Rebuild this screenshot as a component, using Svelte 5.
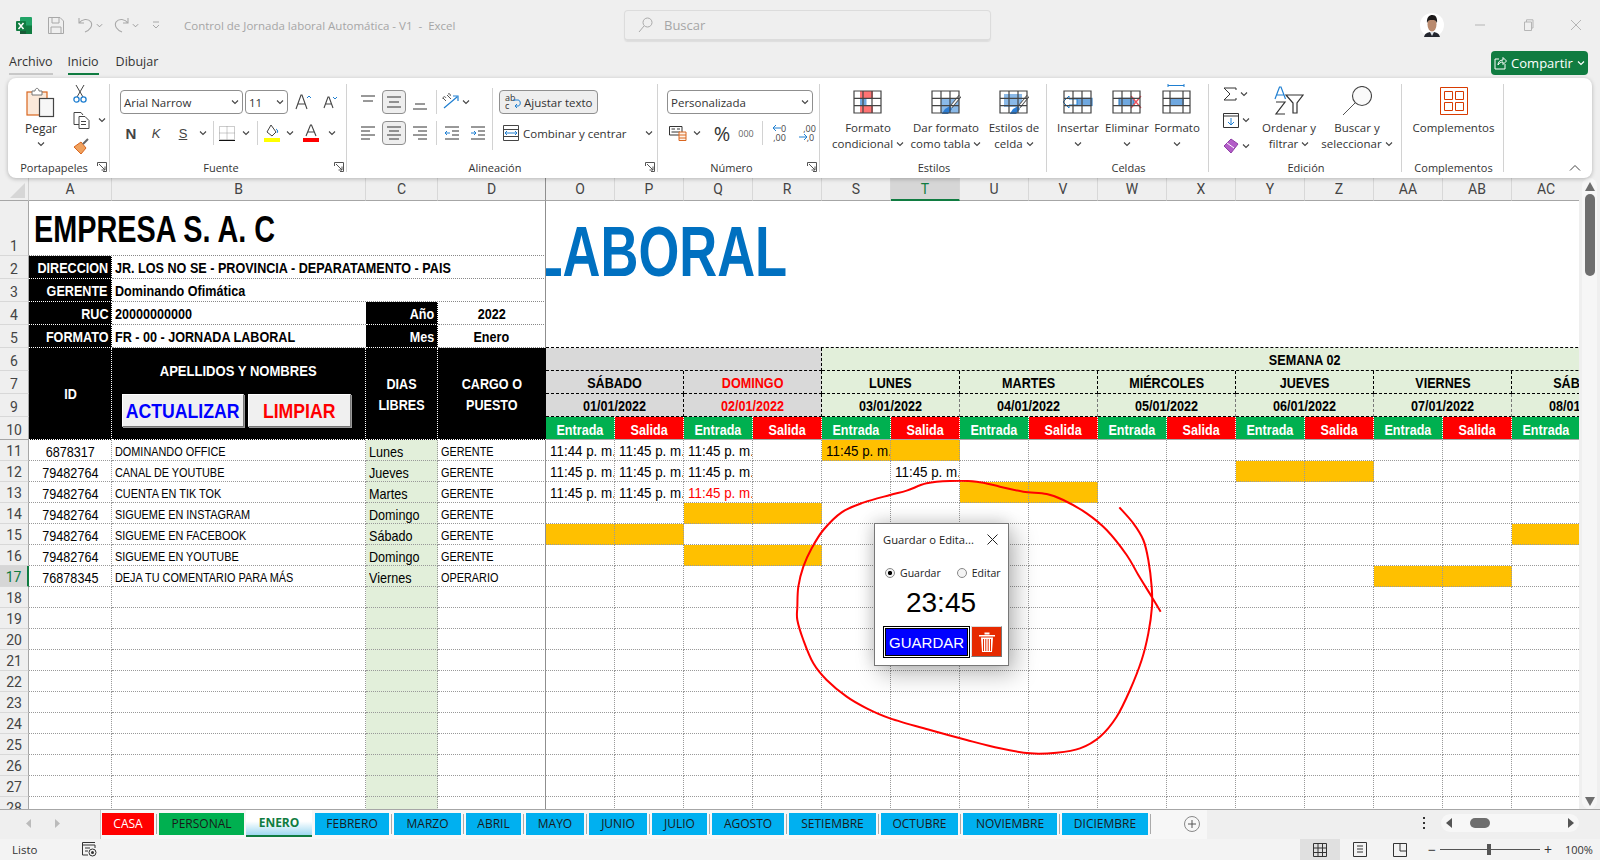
<script>
	const wk = ['O','P','Q','R','S','T','U','V','W','X','Y','Z','AA','AB','AC','AD','AE','AF'];
	const shown = ['O','P','Q','R','S','T','U','V','W','X','Y','Z','AA','AB','AC'];
	const left = ['A','B','C','D'];
	const days = ['SÁBADO','DOMINGO','LUNES','MARTES','MIÉRCOLES','JUEVES','VIERNES','SÁBADO','DOMINGO'];
	const t = '11:45 p. m.';

	const people = [
		{ row: 11, id: '6878317', name: 'DOMINANDO OFFICE', free: 'Lunes', job: 'GERENTE', times: { O: '11:44 p. m.', P: t, Q: t, S: t }, hi: ['S','T'] },
		{ row: 12, id: '79482764', name: 'CANAL DE YOUTUBE', free: 'Jueves', job: 'GERENTE', times: { O: t, P: t, Q: t, T: t }, hi: ['Y','Z'] },
		{ row: 13, id: '79482764', name: 'CUENTA EN TIK TOK', free: 'Martes', job: 'GERENTE', times: { O: t, P: t, Q: t }, hi: ['U','V'], red: 'Q' },
		{ row: 14, id: '79482764', name: 'SIGUEME EN INSTAGRAM', free: 'Domingo', job: 'GERENTE', times: {}, hi: ['Q','R'] },
		{ row: 15, id: '79482764', name: 'SIGUEME EN FACEBOOK', free: 'Sábado', job: 'GERENTE', times: {}, hi: ['O','P','AC','AD'] },
		{ row: 16, id: '79482764', name: 'SIGUEME EN YOUTUBE', free: 'Domingo', job: 'GERENTE', times: {}, hi: ['Q','R'] },
		{ row: 17, id: '76878345', name: 'DEJA TU COMENTARIO PARA MÁS', free: 'Viernes', job: 'OPERARIO', times: {}, hi: ['AA','AB'] }
	];
	const blanks = [18,19,20,21,22,23,24,25,26,27,28];

	const tabs = [
		{ name: 'CASA', w: 52, cls: 'red' }, { name: 'PERSONAL', w: 85, cls: 'green' },
		{ name: 'ENERO', w: 66, cls: 'active' }, { name: 'FEBRERO', w: 74 }, { name: 'MARZO', w: 67 },
		{ name: 'ABRIL', w: 55 }, { name: 'MAYO', w: 58 }, { name: 'JUNIO', w: 58 }, { name: 'JULIO', w: 55 },
		{ name: 'AGOSTO', w: 72 }, { name: 'SETIEMBRE', w: 87 }, { name: 'OCTUBRE', w: 77 },
		{ name: 'NOVIEMBRE', w: 94 }, { name: 'DICIEMBRE', w: 86 }
	];

	// hand drawn circle, traced from the picture (units are 1/3 px)
	const pts = [[1142,395],[1115,350],[1075,285],[1040,225],[980,150],[920,100],[850,60],[800,42],[730,35],[660,20],[590,5],[510,3],[440,10],[380,32],[330,45],[250,68],[185,97],[130,150],[95,205],[70,260],[55,320],[52,380],[52,420],[70,480],[100,550],[140,600],[200,650],[260,685],[330,715],[450,750],[560,780],[660,805],[750,820],[830,818],[900,805],[960,770],[1010,710],[1050,630],[1085,540],[1105,460],[1116,380],[1115,320],[1105,240],[1090,180],[1060,130],[1018,82]];
	const smooth = (p) => {
		let d = `M${p[0][0]} ${p[0][1]}`;
		for (let i = 0; i < p.length - 1; i++) {
			const a = p[i - 1] || p[i], b = p[i], c = p[i + 1], e = p[i + 2] || c;
			d += `C${b[0] + (c[0] - a[0]) / 6} ${b[1] + (c[1] - a[1]) / 6} ${c[0] - (e[0] - b[0]) / 6} ${c[1] - (e[1] - b[1]) / 6} ${c[0]} ${c[1]}`;
		}
		return d;
	};
	const circle = smooth(pts);
</script>

{#snippet chev(size = 8)}
	<svg class="chev" width={size} height={size} viewBox="0 0 8 8"><path d="M1 2.5 4 5.5 7 2.5" fill="none" stroke="#444" stroke-width="1.1"/></svg>
{/snippet}

{#snippet launcher()}
	<svg class="launch" width="10" height="10" viewBox="0 0 10 10"><path d="M.5 4V.5H9.5V9.5H6M2 2 8 8M8 4.5V8H4.5" fill="none" stroke="#555"/></svg>
{/snippet}

{#snippet lines(rows)}
	<svg width="16" height="18" viewBox="0 0 16 18">{#each rows as r}<line x1={r[0]} x2={r[1]} y1={r[2]} y2={r[2]} stroke="#333"/>{/each}</svg>
{/snippet}

{#snippet table3(hi)}
	<svg width="30" height="24" viewBox="0 0 30 24">
		{@render hi()}
		<path d="M1 1H28V23H1ZM1 8.3H28M1 15.6H28M10 1V23M19 1V23" fill="none" stroke="#444" stroke-width="1.2"/>
	</svg>
{/snippet}

{#snippet brush()}
	<path d="M29 6 20 17" stroke="#555" stroke-width="3.5"/><path d="M29 6 20 17" stroke="#fff" stroke-width="1.5"/>
	<path d="M19 16 14 19 10 25 17 24 21 19Z" fill="#2b7cd3"/>
{/snippet}

<div class="app">
	<header class="title">
		<svg class="xl" width="16" height="17" viewBox="0 0 16 17">
			<rect x="4" width="12" height="17" rx="1" fill="#21a366"/><rect x="10" y="8.5" width="6" height="8.5" fill="#107c41"/><rect x="4" y="8.5" width="6" height="8.5" fill="#185c37"/>
			<rect y="4" width="10" height="10" rx="1" fill="#107c41"/><path d="M2.5 6 7.5 12M7.5 6 2.5 12" stroke="#fff" stroke-width="1.5"/>
		</svg>
		<svg class="qat" width="16" height="17" viewBox="0 0 16 17"><path d="M.5.5H12L15.5 4V16.5H.5ZM4 .5V6H11V.5M3 16.5V10H13V16.5" fill="none" stroke="#a8a8a8"/></svg>
		<svg class="qat undo" width="15" height="16" viewBox="0 0 15 16"><path d="M1 1V6H6M1 6C4 2 10 1 13 5 15 9 12 13 7 15" fill="none" stroke="#a8a8a8" stroke-width="1.1"/></svg>
		<span class="qchev">{@render chev(7)}</span>
		<svg class="qat redo" width="15" height="16" viewBox="0 0 15 16"><path d="M14 1V6H9M14 6C11 2 5 1 2 5 0 9 3 13 8 15" fill="none" stroke="#a8a8a8" stroke-width="1.1"/></svg>
		<span class="qchev">{@render chev(7)}</span>
		<svg class="qat more" width="8" height="9" viewBox="0 0 8 9"><path d="M1 1H7M1 4 4 7 7 4" fill="none" stroke="#a8a8a8"/></svg>
		<span class="doc">Control de Jornada laboral Automática - V1 &nbsp;- &nbsp;Excel</span>
		<div class="search">
			<svg width="15" height="16" viewBox="0 0 15 16"><circle cx="9.5" cy="5.5" r="4.5" fill="none" stroke="#aaa"/><path d="M6 9 1 15" stroke="#aaa"/></svg>
			<span>Buscar</span>
		</div>
		<svg class="avatar" width="24" height="24" viewBox="0 0 24 24">
			<ellipse cx="12" cy="12" rx="12" ry="12" fill="#fff"/>
			<path d="M4 24C5 20 8 19.5 10 19H14C16 19.5 19 20 20 24Z" fill="#23262e"/><path d="M10 19 12 23 14 19Z" fill="#dfe3ea"/>
			<ellipse cx="12" cy="11.5" rx="4.5" ry="7" fill="#b98a6e"/><path d="M7 10C6.5 4.5 9 2 12.5 2 16 2 17.5 5.5 17 10 16 7.5 15 7 12 7 9 7 8 7.5 7 10Z" fill="#1d1a1a"/>
		</svg>
		<div class="win">
			<svg width="12" height="12" viewBox="0 0 12 12"><path d="M1 6H11" stroke="#b5b5b5"/></svg>
			<svg width="12" height="12" viewBox="0 0 12 12"><path d="M2.5 3H9.5V11.5H2.5ZM4.5 3V.8H11V9H9.5" fill="none" stroke="#b5b5b5"/></svg>
			<svg width="12" height="12" viewBox="0 0 12 12"><path d="M1 1 11 11M11 1 1 11" stroke="#b5b5b5"/></svg>
		</div>
	</header>

	<nav class="tabsrow">
		<span class="rtab file">Archivo</span>
		<span class="rtab on">Inicio</span>
		<span class="rtab">Dibujar</span>
		<button class="share">
			<svg width="13" height="14" viewBox="0 0 13 14"><path d="M5 3H1V13H11V8M4 9C4 6 6 4 9 4V1.5L12.5 5 9 8.5V6C7 6 5 7 4 9Z" fill="none" stroke="#fff"/></svg>
			Compartir
			<svg width="8" height="8" viewBox="0 0 8 8"><path d="M1 2.5 4 5.5 7 2.5" fill="none" stroke="#fff" stroke-width="1.2"/></svg>
		</button>
	</nav>

	<section class="ribbon">
		<div class="group" style="width:103px">
			<div class="gbody clip">
				<div class="paste">
					<svg width="30" height="32" viewBox="0 0 30 32">
						<rect x="1" y="6" width="20" height="23" fill="#fbe9da" stroke="#d9661f" stroke-width="1.2"/>
						<path d="M6 9V5H9C9 1.5 13 1.5 13 5H16V9Z" fill="#fff" stroke="#777"/>
						<rect x="13.5" y="12.5" width="14" height="18" fill="#f7f7f7" stroke="#444" stroke-width="1.2"/>
					</svg>
					<span>Pegar</span>
					{@render chev()}
				</div>
				<div class="clipcol">
					<svg width="14" height="20" viewBox="0 0 14 20"><path d="M3 1 10 13M11 1 4 13" stroke="#444"/><circle cx="3.5" cy="15.5" r="2.6" fill="none" stroke="#1f7fd1" stroke-width="1.3"/><circle cx="10.5" cy="15.5" r="2.6" fill="none" stroke="#1f7fd1" stroke-width="1.3"/></svg>
					<span class="row"><svg width="18" height="17" viewBox="0 0 18 17"><path d="M6 12.5H1V.5H8L10 3M6 4.5H12L16 8.5V16.5H6ZM8 9.5H13M8 12.5H13" fill="none" stroke="#444"/></svg>{@render chev()}</span>
					<svg width="17" height="17" viewBox="0 0 17 17"><path d="M1 9 8 4 13 10 8 16Z" fill="#f0a15d" stroke="#d9661f"/><path d="M10 6 15 1" stroke="#666" stroke-width="2"/></svg>
				</div>
			</div>
			<div class="glabel first"><span>Portapapeles</span>{@render launcher()}</div>
		</div>

		<div class="group" style="width:237px">
			<div class="gbody col font">
				<div class="line">
					<div class="select" style="width:123px"><span>Arial Narrow</span>{@render chev()}</div>
					<div class="select" style="width:43px"><span>11</span>{@render chev()}</div>
					<svg class="grow" width="17" height="16" viewBox="0 0 17 16"><path d="M1 15 6 1H7L12 15M3 10H10" fill="none" stroke="#444" stroke-width="1.1"/><path d="M12 4 14 2 16 4" fill="none" stroke="#1f7fd1"/></svg>
					<svg class="shrink" width="15" height="14" viewBox="0 0 15 14"><path d="M1 13 5 2H6L10 13M2.5 9H8.5" fill="none" stroke="#444" stroke-width="1.1"/><path d="M10 2 12 4 14 2" fill="none" stroke="#1f7fd1"/></svg>
				</div>
				<div class="line">
					<b class="fb" style="width:22px">N</b>
					<i class="fb" style="width:28px">K</i>
					<u class="fb" style="width:26px">S</u>
					<span class="slot" style="width:14px">{@render chev()}</span>
					<span class="slot" style="width:6px"><i class="vsep"></i></span>
					<span class="slot" style="width:22px"><svg width="16" height="15" viewBox="0 0 16 15"><path d="M.5.5H15.5V13.5H.5ZM8 .5V13.5M.5 7H15.5" fill="none" stroke="#999" stroke-dasharray="1 1"/><path d="M0 14.5H16" stroke="#111"/></svg></span>
					<span class="slot" style="width:16px">{@render chev()}</span>
					<span class="slot" style="width:6px"><i class="vsep"></i></span>
					<span class="slot" style="width:24px"><svg width="16" height="18" viewBox="0 0 16 18"><path d="M7 1 12 8 8 12 3 8Z" fill="#fff" stroke="#444"/><path d="M12 5C14 6 14 8 13 9" fill="none" stroke="#1f7fd1"/><rect y="14" width="16" height="4" fill="#ffff00"/></svg></span>
					<span class="slot" style="width:12px">{@render chev()}</span>
					<span class="slot" style="width:30px"><svg width="16" height="18" viewBox="0 0 16 18"><path d="M3 12 7.5 1H8.5L13 12M4.5 8H11.5" fill="none" stroke="#444" stroke-width="1.1"/><rect y="14" width="16" height="4" fill="#ff0000"/></svg></span>
					<span class="slot" style="width:12px">{@render chev()}</span>
				</div>
			</div>
			<div class="glabel"><span>Fuente</span>{@render launcher()}</div>
		</div>

		<div class="group" style="width:311px">
			<div class="gbody align">
				<div class="algrid">
					<span class="slot">{@render lines([[1,15,3],[3,13,8]])}</span>
					<span class="slot box">{@render lines([[1,15,4],[3,13,9],[1,15,14]])}</span>
					<span class="slot">{@render lines([[3,13,11],[1,15,16]])}</span>
					<span class="slot sepl"><i class="vsep"></i></span>
					<span class="slot wide tight">
						<svg width="18" height="18" viewBox="0 0 18 18">
							<path d="M2 15 15 4M11 3H16V8" fill="none" stroke="#1f7fd1" stroke-width="1.2"/>
							<path d="M1 6C1 3 3 3 4 5M1 5 4 8M5 2 9 6M6 1C8 0 9 2 8 3" fill="none" stroke="#555"/>
						</svg>
						{@render chev()}
					</span>
					<span class="slot">{@render lines([[1,15,3],[1,10,7],[1,15,11],[1,10,15]])}</span>
					<span class="slot box">{@render lines([[1,15,3],[3,13,7],[1,15,11],[3,13,15]])}</span>
					<span class="slot">{@render lines([[1,15,3],[6,15,7],[1,15,11],[6,15,15]])}</span>
					<span class="slot sepl"><i class="vsep"></i></span>
					<span class="slot wide">
						<svg class="ind" width="16" height="15" viewBox="0 0 16 15"><path d="M1 1H15M8 5H15M8 9H15M1 13H15" stroke="#333"/><path d="M1 7H6M3 5 1 7 3 9" fill="none" stroke="#1f7fd1"/></svg>
						<svg class="ind" width="16" height="15" viewBox="0 0 16 15"><path d="M1 1H15M8 5H15M8 9H15M1 13H15" stroke="#333"/><path d="M1 7H6M4 5 6 7 4 9" fill="none" stroke="#1f7fd1"/></svg>
					</span>
				</div>
				<i class="bigsep"></i>
				<div class="col wrap">
					<div class="toggle">
						<span class="abc">ab<br/>c</span>
						<svg class="wrapi" width="8" height="12" viewBox="0 0 8 12"><path d="M0 2H5C8 2 8 8 5 8H2M4 6 2 8 4 10" fill="none" stroke="#1f7fd1"/></svg>
						<span>Ajustar texto</span>
					</div>
					<div class="merge">
						<svg width="16" height="16" viewBox="0 0 16 16"><path d="M.5.5H15.5V15.5H.5ZM.5 4.5H15.5M.5 11.5H15.5" fill="none" stroke="#444"/><path d="M2 8H14M4 6 2 8 4 10M12 6 14 8 12 10" fill="none" stroke="#1f7fd1"/></svg>
						<span>Combinar y centrar</span>
						{@render chev()}
					</div>
				</div>
			</div>
			<div class="glabel"><span>Alineación</span>{@render launcher()}</div>
		</div>

		<div class="group" style="width:162px">
			<div class="gbody col num">
				<div class="select" style="width:146px"><span>Personalizada</span>{@render chev()}</div>
				<div class="line">
					<span class="slot" style="width:22px"><svg width="18" height="16" viewBox="0 0 18 16"><path d="M.5 1.5H13V10H.5ZM2.5 4H6M8 4H11M2.5 7H11" fill="none" stroke="#333"/><path d="M10 7H17V15.5H10ZM10 10H17M10 13H17" fill="#fff3e8" stroke="#d9661f"/></svg></span>
					<span class="slot" style="width:16px">{@render chev()}</span>
					<span class="pct">%</span>
					<span class="thou">000</span>
					<span class="slot" style="width:8px"><i class="vsep"></i></span>
					<span class="dec"><svg width="8" height="8" viewBox="0 0 8 8"><path d="M0 4H8M3 1 0 4 3 7" fill="none" stroke="#1f7fd1"/></svg>0<br/>,00</span>
					<span class="dec"><span class="decr">,00</span><br/><svg width="8" height="8" viewBox="0 0 8 8"><path d="M0 4H8M5 1 8 4 5 7" fill="none" stroke="#1f7fd1"/></svg>,0</span>
				</div>
			</div>
			<div class="glabel"><span>Número</span>{@render launcher()}</div>
		</div>

		<div class="group" style="width:227px">
			<div class="gbody pad4">
				<div class="big" style="width:86px">
					{#snippet cf()}<rect x="7" y="1" width="13" height="7" fill="#ff7373"/><rect x="7" y="8" width="6.5" height="8" fill="#6fa8e0"/><rect x="7" y="16" width="13" height="7" fill="#ff7373"/>{/snippet}
					{@render table3(cf)}
					<span>Formato</span>
					<span>condicional {@render chev()}</span>
				</div>
				<div class="big" style="width:70px">
					{#snippet ft()}<rect x="10" y="8.3" width="18" height="14.7" fill="#8ab9e8"/>{@render brush()}{/snippet}
					{@render table3(ft)}
					<span>Dar formato</span>
					<span>como tabla {@render chev()}</span>
				</div>
				<div class="big" style="width:66px">
					{#snippet es()}<rect x="5" y="4" width="18" height="13" fill="#8ab9e8"/>{@render brush()}{/snippet}
					{@render table3(es)}
					<span>Estilos de</span>
					<span>celda {@render chev()}</span>
				</div>
			</div>
			<div class="glabel"><span>Estilos</span></div>
		</div>

		<div class="group" style="width:162px">
			<div class="gbody pad4">
				<div class="big" style="width:52px">
					{#snippet ins()}<rect x="10" y="8.3" width="19" height="7.3" fill="#6fa8e0" stroke="#1f6fb8"/><path d="M0 12 6 6V9H14V15H6V18Z" fill="#fff" stroke="#1f7fd1"/>{/snippet}
					{@render table3(ins)}
					<span>Insertar</span>
					{@render chev()}
				</div>
				<div class="big" style="width:46px">
					{#snippet del()}<rect x="7" y="8.3" width="15" height="7.3" fill="#6fa8e0" stroke="#1f6fb8"/><path d="M19 6 29 18M29 6 19 18" stroke="#f0505a" stroke-width="1.3"/>{/snippet}
					{@render table3(del)}
					<span>Eliminar</span>
					{@render chev()}
				</div>
				<div class="big" style="width:54px">
					<svg class="fmt" width="30" height="30" viewBox="0 0 30 30">
						<path d="M6 1.5H22M6 0V3M22 0V3" stroke="#1f7fd1"/>
						<rect x="8" y="14" width="14" height="8" fill="#6fa8e0"/>
						<path d="M1 7H28V29H1ZM1 14.3H28M1 21.6H28M8 7V29M21 7V29" fill="none" stroke="#444" stroke-width="1.2"/>
					</svg>
					<span>Formato</span>
					{@render chev()}
				</div>
			</div>
			<div class="glabel"><span>Celdas</span></div>
		</div>

		<div class="group" style="width:193px">
			<div class="gbody">
				<div class="editcol">
					<span class="row"><svg width="14" height="14" viewBox="0 0 14 14"><path d="M13 3V1H1L7 7 1 13H13V11" fill="none" stroke="#333"/></svg>{@render chev()}</span>
					<span class="row"><svg width="16" height="15" viewBox="0 0 16 15"><path d="M.5.5H15.5V14.5H.5ZM.5 3H15.5" fill="none" stroke="#333"/><path d="M8 5V12M5 9 8 12 11 9" fill="none" stroke="#1f7fd1"/></svg>{@render chev()}</span>
					<span class="row"><svg width="16" height="16" viewBox="0 0 16 16"><path d="M1 8 8 1 15 6 8 15Z" fill="#b35cc8" stroke="#8f3fa6"/><path d="M4 5 11 10" stroke="#fff"/></svg>{@render chev()}</span>
				</div>
				<div class="big" style="width:66px">
					<svg class="sort" width="30" height="30" viewBox="0 0 30 30">
						<path d="M1 13 5.5 1H7L11.5 13M3 9H9.5" fill="none" stroke="#1f7fd1" stroke-width="1.2"/>
						<path d="M2 16H11L2 28H11" fill="none" stroke="#333" stroke-width="1.2"/>
						<path d="M12 9H29L23 17V27H19V17Z" fill="none" stroke="#333" stroke-width="1.2"/>
					</svg>
					<span>Ordenar y</span>
					<span>filtrar {@render chev()}</span>
				</div>
				<div class="big" style="width:70px">
					<svg class="sort" width="30" height="30" viewBox="0 0 30 30"><circle cx="20" cy="10" r="9.5" fill="#fafafa" stroke="#444" stroke-width="1.1"/><path d="M13 17 1 29" stroke="#555"/></svg>
					<span>Buscar y</span>
					<span>seleccionar {@render chev()}</span>
				</div>
			</div>
			<div class="glabel"><span>Edición</span></div>
		</div>

		<div class="group" style="width:102px">
			<div class="gbody">
				<div class="big" style="width:101px">
					<svg class="sort" width="28" height="28" viewBox="0 0 28 28"><path d="M.5.5H27.5V27.5H.5ZM4.5 4.5H12.5V12.5H4.5ZM15.5 4.5H23.5V12.5H15.5ZM4.5 15.5H12.5V23.5H4.5ZM15.5 15.5H23.5V23.5H15.5Z" fill="none" stroke="#d83b01"/></svg>
					<span>Complementos</span>
				</div>
			</div>
			<div class="glabel"><span>Complementos</span></div>
		</div>

		<div class="rest">
			<svg width="12" height="8" viewBox="0 0 12 8"><path d="M1 6.5 6 1.5 11 6.5" fill="none" stroke="#444"/></svg>
		</div>
	</section>

	<main class="sheetwrap">
		<div class="sheet">
			<table>
				<colgroup>
					<col class="c-rh"/><col class="c-a"/><col class="c-b"/><col class="c-c"/><col class="c-d"/>
					{#each wk as c}<col class="c-w"/>{/each}
				</colgroup>
				<thead>
					<tr class="h23">
						<th class="corner"><i></i></th>
						{#each left as c}<th class="ch" class:froz={c === 'D'}>{c}</th>{/each}
						{#each shown as c}<th class="ch" class:cur={c === 'T'}>{c}</th>{/each}
						<th class="ch" colspan="3"></th>
					</tr>
				</thead>
				<tbody>
					<tr class="h55">
						<th class="rh">1</th>
						<td colspan="4" class="brand froz"><span class="n">EMPRESA S. A. C</span></td>
						<td colspan="18" rowspan="5" class="banner"><div><span class="n">LABORAL</span></div></td>
					</tr>
					<tr class="h23">
						<th class="rh">2</th>
						<td class="bk right"><span class="n">DIRECCION</span></td>
						<td colspan="3" class="val froz"><span class="n">JR. LOS NO SE - PROVINCIA - DEPARATAMENTO - PAIS</span></td>
					</tr>
					<tr class="h23">
						<th class="rh">3</th>
						<td class="bk right"><span class="n">GERENTE</span></td>
						<td colspan="3" class="val froz"><span class="n">Dominando Ofimática</span></td>
					</tr>
					<tr class="h23">
						<th class="rh">4</th>
						<td class="bk right"><span class="n">RUC</span></td>
						<td class="val"><span class="n">20000000000</span></td>
						<td class="bk right"><span class="n">Año</span></td>
						<td class="val mid froz"><span class="n">2022</span></td>
					</tr>
					<tr class="h23">
						<th class="rh">5</th>
						<td class="bk right"><span class="n">FORMATO</span></td>
						<td class="val"><span class="n">FR - 00 - JORNADA LABORAL</span></td>
						<td class="bk right"><span class="n">Mes</span></td>
						<td class="val mid froz"><span class="n">Enero</span></td>
					</tr>
					<tr class="h23">
						<th class="rh">6</th>
						<td rowspan="4" class="bk mid"><span class="n">ID</span></td>
						<td rowspan="4" class="bk mid names">
							<div class="namesin">
								<span class="n">APELLIDOS Y NOMBRES</span>
								<div class="xlbtns">
									<button class="xb blue"><span class="n">ACTUALIZAR</span></button>
									<button class="xb redt"><span class="n">LIMPIAR</span></button>
								</div>
							</div>
						</td>
						<td rowspan="4" class="bk mid two"><span class="n">DIAS<br/>LIBRES</span></td>
						<td rowspan="4" class="bk mid two lastb"><span class="n">CARGO O<br/>PUESTO</span></td>
						<td colspan="4" class="gray"></td>
						<td colspan="14" class="lgreen wkt"><span class="n">SEMANA 02</span></td>
					</tr>
					<tr class="h23">
						<th class="rh">7</th>
						{#each days as d, i}
							<td colspan="2" class="wkt dash" class:gray={i < 2} class:lgreen={i >= 2} class:rt={d === 'DOMINGO'}><span class="n">{d}</span></td>
						{/each}
					</tr>
					<tr class="h23">
						<th class="rh">9</th>
						{#each days as d, i}
							<td colspan="2" class="wkt dash soft" class:gray={i < 2} class:lgreen={i >= 2} class:rt={d === 'DOMINGO'}><span class="n">0{i + 1}/01/2022</span></td>
						{/each}
					</tr>
					<tr class="h23 lastrow">
						<th class="rh">10</th>
						{#each days as d}
							<td class="io in"><span class="n">Entrada</span></td>
							<td class="io out"><span class="n">Salida</span></td>
						{/each}
					</tr>
					{#each people as p}
						<tr class="h21">
							<th class="rh" class:cur={p.row === 17}>{p.row}</th>
							<td class="gc idc"><span class="n">{p.id}</span></td>
							<td class="gc small"><span class="n">{p.name}</span></td>
							<td class="gc free"><span class="n">{p.free}</span></td>
							<td class="gc small froz"><span class="n">{p.job}</span></td>
							{#each wk as c}
								<td class="gc time" class:hi={p.hi.includes(c)} class:rt={p.red === c}><span class="n">{p.times[c] || ''}</span></td>
							{/each}
						</tr>
					{/each}
					{#each blanks as r}
						<tr class="h21">
							<th class="rh">{r}</th>
							<td class="gc"></td><td class="gc"></td><td class="gc free"></td><td class="gc froz"></td>
							{#each wk as c}<td class="gc"></td>{/each}
						</tr>
					{/each}
				</tbody>
			</table>
		</div>
		<aside class="vscroll">
			<i class="up"></i>
			<i class="thumb"></i>
			<i class="down"></i>
		</aside>
	</main>

	<footer class="sheets">
		<div class="nav">
			<svg width="6" height="9" viewBox="0 0 6 9"><path d="M5 0V9L0 4.5Z" fill="#bbb"/></svg>
			<svg width="6" height="9" viewBox="0 0 6 9"><path d="M1 0V9L6 4.5Z" fill="#bbb"/></svg>
		</div>
		<div class="strip">
			{#each tabs as tb}
				<span class="stab {tb.cls || ''}" style="width:{tb.w}px">{tb.name}</span>
			{/each}
			<span class="add">
				<svg width="16" height="16" viewBox="0 0 16 16"><circle cx="8" cy="8" r="7.5" fill="none" stroke="#888"/><path d="M8 4V12M4 8H12" stroke="#555"/></svg>
			</span>
		</div>
		<div class="hs">
			<span class="dots"></span>
			<div class="hbar">
				<svg width="7" height="10" viewBox="0 0 7 10"><path d="M6 0V10L0 5Z" fill="#555"/></svg>
				<i class="hthumb"></i>
				<svg width="7" height="10" viewBox="0 0 7 10"><path d="M1 0V10L7 5Z" fill="#555"/></svg>
			</div>
		</div>
	</footer>

	<footer class="status">
		<span class="ready">Listo</span>
		<svg class="macro" width="15" height="15" viewBox="0 0 15 15"><path d="M.5.5H13M.5 3H13V6M.5.5V13H6M3 6H8M3 9H6" fill="none" stroke="#333"/><circle cx="10.5" cy="10.5" r="3.5" fill="none" stroke="#333"/><circle cx="10.5" cy="10.5" r="1.5" fill="#333"/></svg>
		<div class="views">
			<span class="view on"><svg width="14" height="14" viewBox="0 0 14 14"><path d="M.5.5H13.5V13.5H.5ZM.5 5H13.5M.5 9.5H13.5M5 .5V13.5M9.5 .5V13.5" fill="none" stroke="#333"/></svg></span>
			<span class="view"><svg width="14" height="15" viewBox="0 0 14 15"><path d="M.5.5H13.5V14.5H.5ZM4 4H10M4 7H10M4 10H10" fill="none" stroke="#333"/></svg></span>
			<span class="view"><svg width="14" height="14" viewBox="0 0 14 14"><path d="M.5 13.5V.5H13.5V13.5ZM7 .5V8H13.5" fill="none" stroke="#333"/></svg></span>
		</div>
		<div class="zoom">
			<span class="zs">−</span>
			<span class="track"><i></i></span>
			<span class="zs">+</span>
			<span class="pc">100%</span>
		</div>
	</footer>

	<svg class="scrawl" width="400" height="300" viewBox="0 0 1200 900"><path d={circle} fill="none" stroke="#f00" stroke-width="6"/></svg>

	<div class="dialog">
		<div class="dhead">
			<span>Guardar o Edita...</span>
			<svg width="11" height="11" viewBox="0 0 11 11"><path d="M.5.5 10.5 10.5M10.5.5 .5 10.5" stroke="#222"/></svg>
		</div>
		<div class="radios">
			<label class="radio"><i class="dot on"></i>Guardar</label>
			<label class="radio"><i class="dot"></i>Editar</label>
		</div>
		<div class="clock">23:45</div>
		<div class="dbtns">
			<button class="save">GUARDAR</button>
			<button class="trash">
				<svg width="16" height="22" viewBox="0 0 16 22"><path d="M5.5 1.5H10.5V3.5H5.5ZM0 4H16V5.5H0ZM2 6.5H14L13 21H3Z" fill="#fff"/><path d="M4.5 8V20M6.8 8V20M9.200 8V20M11.5 8V20" stroke="#e62a00"/></svg>
			</button>
		</div>
	</div>
</div>

<style>
	:global(body) {
		margin: 0;
		background: #efefef;
	}

	.app {
		position: relative;
		width: 1600px;
		height: 860px;
		overflow: hidden;
		display: flex;
		flex-direction: column;
		background: #efefef;
		font-family: "Open Sans", "Noto Sans", sans-serif;
		font-size: 11.5px;
		color: #333;
	}

	/* title bar */
	.title {
		height: 50px;
		display: flex;
		align-items: center;
		padding-left: 16px;
		box-sizing: border-box;
	}
	.qat { margin-left: 16px; }
	.qat.undo { margin-left: 14px; }
	.qat.redo { margin-left: 11px; }
	.qat.more { margin-left: 13px; }
	.qchev { margin-left: 3px; display: flex; opacity: .5; }
	.doc {
		margin-left: 24px;
		width: 400px;
		white-space: nowrap;
		color: #a6a6a6;
		font-size: 11.5px;
	}
	.search {
		margin-left: 40px;
		width: 367px;
		height: 31px;
		box-sizing: border-box;
		border: 1px solid #dcdcdc;
		border-bottom-width: 2px;
		border-radius: 4px;
		display: flex;
		align-items: center;
		gap: 11px;
		padding-left: 13px;
		color: #a6a6a6;
		font-size: 13px;
		box-shadow: 0 1px 1px #ddd;
	}
	.avatar { margin-left: 429px; }
	.win {
		margin-left: 30px;
		display: flex;
		gap: 36px;
	}

	/* ribbon tabs */
	.tabsrow {
		height: 28px;
		display: flex;
		align-items: flex-start;
		padding-left: 9px;
		font-size: 12.5px;
		color: #333;
	}
	.rtab {
		height: 21px;
		line-height: 20px;
		margin-right: 17px;
		border-bottom: 2px solid transparent;
		padding-top: 2px;
	}
	.rtab.file { border-color: #c8c8c8; margin-right: 15px; }
	.rtab.on { border-color: #107c41; }
	.share {
		margin-left: auto;
		margin-top: 1px;
		margin-right: 12px;
		width: 97px;
		height: 24px;
		border: 0;
		border-radius: 4px;
		background: #107c41;
		color: #fff;
		font: 13px "Open Sans", sans-serif;
		display: flex;
		align-items: center;
		justify-content: center;
		gap: 4px;
		padding: 0;
	}

	/* ribbon */
	.ribbon {
		margin: 0 8px;
		height: 100px;
		box-sizing: border-box;
		background: #fff;
		border-radius: 8px;
		box-shadow: 0 1px 4px rgba(0,0,0,.25);
		display: flex;
		position: relative;
		z-index: 2;
	}
	.group {
		position: relative;
		flex: none;
		box-sizing: border-box;
		border-right: 1px solid transparent;
		display: flex;
		flex-direction: column;
	}
	.group::after {
		content: "";
		position: absolute;
		right: 0;
		top: 6px;
		bottom: 6px;
		width: 1px;
		background: #d2d2d2;
	}
	.gbody {
		height: 79px;
		box-sizing: border-box;
		padding-top: 3px;
		display: flex;
	}
	.glabel {
		height: 20px;
		display: flex;
		align-items: center;
		white-space: nowrap;
		font-size: 11px;
	}
	.glabel.first { padding-left: 6px; }
	.glabel span { flex: 1; text-align: center; }
	.launch { margin-right: 3px; margin-left: 3px; }
	.col { flex-direction: column; }
	.row { display: flex; align-items: center; gap: 3px; }
	.chev { flex: none; }
	.slot { display: flex; align-items: center; justify-content: center; }
	.vsep { display: block; width: 1px; height: 24px; background: #d2d2d2; }

	.clip { padding-left: 9px; }
	.paste {
		width: 48px;
		padding-top: 5px;
		display: flex;
		flex-direction: column;
		align-items: center;
		font-size: 12px;
	}
	.paste span { line-height: 22px; }
	.clipcol {
		margin-left: 4px;
		display: grid;
		grid-template-rows: 26px 26px 26px;
		align-items: center;
		justify-items: start;
	}
	.clipcol svg:first-child, .clipcol svg:last-child { margin-left: 4px; }

	.font { padding: 12px 0 0 9px; gap: 7px; }
	.line { display: flex; align-items: center; height: 24px; }
	.select {
		box-sizing: border-box;
		height: 24px;
		border: 1px solid #8f8f8f;
		border-radius: 4px;
		display: flex;
		align-items: center;
		justify-content: space-between;
		padding: 0 3px;
		margin-right: 2px;
		font-size: 11.5px;
	}
	.grow { margin-left: 5px; }
	.shrink { margin-left: 11px; }
	.fb {
		text-align: center;
		font-size: 13px;
		font-family: "Liberation Sans", sans-serif;
		color: #444;
	}
	b.fb { font-size: 15px; }

	.align { padding: 12px 0 0 8px; }
	.algrid {
		display: grid;
		grid-template-columns: 24px 24px 24px 4px 56px;
		column-gap: 2px;
		grid-template-rows: 24px 24px;
		row-gap: 7px;
		width: 136px;
	}
	.box {
		background: #eee;
		border: 1px solid #8f8f8f;
		border-radius: 4px;
		box-sizing: border-box;
	}
	.wide { justify-content: flex-start; gap: 10px; padding-left: 4px; }
	.wide.tight { gap: 2px; padding-left: 2px; }
	.ind { flex: none; }
	.bigsep {
		display: block;
		width: 1px;
		height: 62px;
		background: #d2d2d2;
		margin: -2px 6px 0 0;
	}
	.wrap { display: flex; gap: 7px; }
	.toggle {
		box-sizing: border-box;
		width: 99px;
		height: 24px;
		background: #eee;
		border: 1px solid #8f8f8f;
		border-radius: 4px;
		display: flex;
		align-items: center;
		padding-left: 5px;
		font-size: 11.5px;
		white-space: nowrap;
	}
	.abc { font-size: 9px; line-height: 8px; width: 8px; }
	.wrapi { margin: 4px 3px 0 0; }
	.merge {
		display: flex;
		align-items: center;
		height: 24px;
		padding-left: 4px;
		gap: 4px;
		white-space: nowrap;
	}
	.merge .chev { margin-left: 14px; }

	.num { display: flex; padding: 12px 0 0 8px; gap: 7px; }
	.pct { width: 24px; margin-left: 5px; font-size: 20px; text-align: center; }
	.thou { width: 24px; font-size: 9px; color: #666; text-align: center; }
	.dec { width: 27px; font-size: 9px; line-height: 9px; color: #444; text-align: center; }
	.decr { margin-left: 6px; }

	.pad4 { padding-left: 4px; }
	.big {
		flex: none;
		display: flex;
		flex-direction: column;
		align-items: center;
		padding-top: 8px;
		font-size: 11.5px;
		line-height: 16px;
		white-space: nowrap;
		box-sizing: border-box;
	}
	.big > svg:first-child { margin: 1px 0 6px; height: 24px; }
	.big > svg.fmt { height: 30px; margin: -5px 0 6px; }
	.big > svg.sort { height: 30px; margin: -3px 0 4px; }
	.big > svg.chev { margin-top: 4px; }
	.editcol {
		width: 46px;
		padding: 0 0 0 13px;
		box-sizing: border-box;
		display: grid;
		grid-template-rows: 26px 26px 26px;
		align-items: center;
	}
	.rest {
		flex: 1;
		display: flex;
		align-items: flex-end;
		justify-content: flex-end;
		padding: 0 11px 6px 0;
	}

	/* grid */
	.sheetwrap {
		height: 632px;
		display: flex;
		border-bottom: 1px solid #a6a6a6;
		box-sizing: border-box;
	}
	.sheet {
		width: 1579px;
		overflow: hidden;
		flex: none;
		background: #fff;
	}
	table {
		table-layout: fixed;
		width: 1788px;
		border-collapse: separate;
		border-spacing: 0;
		font-family: "Liberation Sans", sans-serif;
		font-size: 15px;
		color: #000;
	}
	.c-rh { width: 29px; }
	.c-a { width: 83px; }
	.c-b { width: 254px; }
	.c-c { width: 72px; }
	.c-d { width: 108px; }
	.c-w { width: 69px; }
	.h21 { height: 21px; }
	.h23 { height: 23px; }
	.h55 { height: 55px; }
	td, th {
		box-sizing: border-box;
		padding: 0;
		overflow: hidden;
		white-space: nowrap;
		font-weight: normal;
		line-height: 16px;
	}
	/* no Arial Narrow on the box: squeeze Arial-width text instead */
	.n {
		display: inline-block;
		transform: scaleX(.84);
		transform-origin: center;
	}
	.val .n, .small .n, .free .n, .brand .n { transform-origin: left; }
	.right .n, .banner .n { transform-origin: right; }
	.right .n { margin-left: -20px; }
	.val.mid .n { transform-origin: center; }
	.small .n { transform: scaleX(.87); }
	.time .n { transform: scaleX(.89); }
	.brand .n { transform: scaleX(.8); }
	.banner .n { transform: scaleX(.75); }
	.names > .namesin > .n { transform: scaleX(.87); }

	.ch {
		background: #efefef;
		border-right: 1px solid #d8d8d8;
		border-bottom: 1px solid #a6a6a6;
		font: 14px Roboto, sans-serif;
		color: #444;
		text-align: center;
	}
	.ch.froz { border-right: 1px solid #8f8f8f; }
	.ch.cur {
		background: #d6d6d6;
		color: #107c41;
		border-bottom: 2px solid #107c41;
	}
	.corner {
		background: #efefef;
		border-bottom: 1px solid #a6a6a6;
		border-right: 1px solid #d0d0d0;
		vertical-align: bottom;
	}
	.corner i {
		display: block;
		width: 0;
		height: 0;
		margin: 0 0 2px 10px;
		border-style: solid;
		border-width: 0 0 15px 15px;
		border-color: transparent transparent #d6d6d6 transparent;
	}
	.rh {
		background: #efefef;
		border-right: 1px solid #a6a6a6;
		border-bottom: 1px solid #d8d8d8;
		font: 14px Roboto, sans-serif;
		color: #444;
		text-align: center;
		vertical-align: bottom;
		padding-bottom: 1px;
	}
	.rh.cur {
		background: #d6d6d6;
		color: #107c41;
		border-right: 2px solid #107c41;
	}
	.froz { border-right: 1px solid #8f8f8f; }

	.brand {
		font-size: 36px;
		font-weight: 700;
		padding: 9px 0 0 5px;
		line-height: 40px;
		vertical-align: top;
		border-bottom: 1px dotted #888;
	}
	.banner {
		vertical-align: top;
		padding-top: 15px;
		border-bottom: 1px dashed #000;
	}
	.banner div {
		width: 241px;
		overflow: hidden;
		display: flex;
		justify-content: flex-end;
		font-size: 70px;
		font-weight: 700;
		line-height: 72px;
		color: #0070c0;
	}
	.bk {
		background: #000;
		color: #fff;
		font-weight: 700;
		font-size: 15px;
		border-right: 1px dotted #fff;
		border-bottom: 1px dotted #fff;
	}
	.right {
		text-align: right;
		padding-right: 3px;
		vertical-align: bottom;
		line-height: 20px;
	}
	.mid { text-align: center; }
	.val {
		font-weight: 700;
		padding-left: 3px;
		border-bottom: 1px dotted #888;
		vertical-align: bottom;
		line-height: 21px;
	}
	.val.mid { padding-left: 0; }
	.two { line-height: 21px; }
	.lastb { border-right: 0; }
	.names { padding: 0; vertical-align: top; }
	.namesin {
		display: flex;
		flex-direction: column;
		align-items: center;
		padding-top: 15px;
		gap: 15px;
	}
	.xlbtns {
		display: flex;
		gap: 4px;
		align-self: flex-start;
		margin-left: 10px;
	}
	.xb {
		height: 33px;
		background: #f0f0f0;
		border: 1px solid;
		border-color: #fff #777 #777 #fff;
		box-shadow: 1px 1px 0 #999;
		font-family: "Liberation Sans", sans-serif;
		font-weight: 700;
		font-size: 21px;
		padding: 0;
		white-space: nowrap;
		display: flex;
		align-items: center;
		justify-content: center;
	}
	.blue { width: 122px; color: #00f; }
	.redt { width: 103px; color: #f00; }
	.gray { background: #d9d9d9; }
	.lgreen { background: #e2efda; }
	.wkt {
		text-align: center;
		font-weight: 700;
		border-bottom: 1px dashed #000;
		vertical-align: bottom;
		line-height: 20px;
	}
	.gray.wkt, td.gray { border-bottom: 1px dashed #000; }
	td.gray, .lgreen.wkt:not(.dash) { border-right: 1px dashed #000; }
	.dash { border-right: 1px dashed #000; }
	.soft { border-right: 1px dashed #777; }
	.rt { color: #f00; }
	.io {
		color: #fff;
		font-weight: 700;
		text-align: center;
		border-right: 1px dotted #fff;
		border-bottom: 1px solid #a6a6a6;
		vertical-align: bottom;
		line-height: 19px;
	}
	.lastrow .rh { border-bottom: 1px solid #a6a6a6; }
	.in { background: #00b050; }
	.out { background: #f00; }
	.gc {
		border-right: 1px dotted #999;
		border-bottom: 1px dotted #999;
		vertical-align: bottom;
		line-height: 15px;
	}
	.gc.froz { border-right: 1px solid #8f8f8f; }
	.idc { text-align: center; line-height: 17px; }
	.small { font-size: 12.5px; padding-left: 3px; }
	.free { background: #e2efda; padding-left: 3px; line-height: 17px; }
	.time { text-align: center; line-height: 19px; }
	.hi { background: #ffc000; }

	/* scroll */
	.vscroll {
		flex: 1;
		margin: 0 3px;
		border-radius: 8px;
		background: #f6f6f6;
		display: flex;
		flex-direction: column;
		align-items: center;
		padding-top: 4px;
	}
	.up, .down {
		width: 0;
		height: 0;
		border: 5px solid transparent;
	}
	.up { border-bottom: 9px solid #6e6e6e; border-top: 0; }
	.down { border-top: 9px solid #6e6e6e; border-bottom: 0; margin-top: auto; margin-bottom: 3px; }
	.thumb {
		margin-top: 3px;
		width: 10px;
		height: 82px;
		border-radius: 5px;
		background: #6e6e6e;
	}

	/* sheet tabs */
	.sheets {
		height: 29px;
		display: flex;
		flex: none;
	}
	.nav {
		width: 100px;
		display: flex;
		align-items: center;
		gap: 22px;
		padding-left: 26px;
		box-sizing: border-box;
		margin-bottom: 3px;
	}
	.strip {
		width: 1107px;
		background: #f7f7f7;
		display: flex;
		align-items: flex-start;
		padding: 3px 0 0 1px;
		box-sizing: border-box;
		gap: 5px;
		border-left: 1px solid #c8c8c8;
	}
	.stab {
		height: 22px;
		line-height: 22px;
		text-align: center;
		background: #00b0f0;
		color: #1a1a1a;
		font-size: 12px;
		flex: none;
		box-shadow: 3px 0 0 -1px #f7f7f7, 4px 0 0 -1px #aaa;
	}
	.stab.red { background: #f00; color: #fff; }
	.stab.green { background: #00b050; }
	.stab.active {
		margin: -3px -2px 0 -3px;
		height: 25px;
		line-height: 26px;
		background: linear-gradient(#fff 45%, #9fd9f2);
		color: #107c41;
		font-weight: 700;
		border-bottom: 2px solid #107c41;
		box-shadow: none;
		box-sizing: content-box;
	}
	.add {
		margin: 3px 0 0 31px;
		display: flex;
	}
	.hs {
		flex: 1;
		display: flex;
		align-items: center;
		justify-content: flex-end;
		padding-right: 21px;
		margin-bottom: 3px;
	}
	.dots {
		width: 2px;
		height: 2px;
		background: #333;
		box-shadow: 0 -5px 0 #333, 0 5px 0 #333;
		margin-right: 16px;
	}
	.hbar {
		width: 138px;
		height: 18px;
		border-radius: 9px;
		background: #f7f7f7;
		display: flex;
		align-items: center;
		padding: 0 5px;
		box-sizing: border-box;
	}
	.hthumb {
		width: 20px;
		height: 10px;
		border-radius: 5px;
		background: #6e6e6e;
		margin: 0 auto 0 17px;
	}

	/* status */
	.status {
		height: 21px;
		flex: none;
		background: #f3f3f3;
		display: flex;
		align-items: center;
		position: relative;
		font-size: 11.5px;
	}
	.ready { margin-left: 12px; width: 70px; }
	.macro { flex: none; }
	.views {
		margin-left: auto;
		display: flex;
		height: 21px;
	}
	.view {
		width: 40px;
		display: flex;
		align-items: center;
		justify-content: center;
	}
	.view.on { background: #e0e0e0; }
	.zoom {
		display: flex;
		align-items: center;
		margin-left: 7px;
		width: 173px;
		height: 21px;
	}
	.zs { font-size: 14px; width: 10px; text-align: center; }
	.track {
		display: block;
		position: relative;
		width: 100px;
		height: 1px;
		background: #555;
		margin: 0 3px;
	}
	.track i {
		position: absolute;
		left: 47px;
		top: -5px;
		width: 4px;
		height: 11px;
		background: #555;
	}
	.pc { margin-left: 12px; font-size: 11px; }

	/* red marker */
	.scrawl {
		position: absolute;
		left: 780px;
		top: 480px;
		pointer-events: none;
		z-index: 3;
	}

	/* floating form */
	.dialog {
		position: absolute;
		left: 874px;
		top: 523px;
		z-index: 4;
		width: 135px;
		height: 143px;
		box-sizing: border-box;
		background: #fff;
		border: 1px solid #777;
		box-shadow: 6px 8px 22px rgba(0,0,0,.28), -3px -3px 14px rgba(0,0,0,.12);
		padding: 0 6px 0 8px;
		display: flex;
		flex-direction: column;
	}
	.dhead {
		height: 30px;
		display: flex;
		align-items: center;
		justify-content: space-between;
		padding-right: 4px;
		font-size: 11.2px;
		color: #222;
		white-space: nowrap;
	}
	.radios {
		margin-top: 9px;
		padding-left: 2px;
		height: 20px;
		display: flex;
		align-items: center;
		font-size: 10.5px;
		color: #222;
		gap: 16px;
	}
	.radio { display: flex; align-items: center; gap: 5px; }
	.dot {
		display: block;
		width: 10px;
		height: 10px;
		box-sizing: border-box;
		border-radius: 50%;
		border: 1px solid #888;
		background: #f4f4f4;
	}
	.dot.on { background: radial-gradient(#000 35%, #f4f4f4 40%); }
	.clock {
		text-align: center;
		font: 28px/30px "Liberation Sans", sans-serif;
		color: #000;
		margin-top: 5px;
		padding-right: 3px;
	}
	.dbtns {
		margin-top: 8px;
		display: flex;
		gap: 1px;
	}
	.save {
		width: 88px;
		height: 32px;
		box-sizing: border-box;
		background: #00f;
		border: 2px solid #fff;
		outline: 1px solid #000;
		outline-offset: -1px;
		box-shadow: inset 0 0 0 1px #000;
		color: #fff;
		font: 15px "Liberation Sans", sans-serif;
		padding: 0;
	}
	.trash {
		width: 31px;
		height: 31px;
		box-sizing: border-box;
		background: #e62a00;
		border: 1px solid;
		border-color: #ddd #777 #777 #ddd;
		padding: 0;
		display: flex;
		align-items: center;
		justify-content: center;
	}
</style>
